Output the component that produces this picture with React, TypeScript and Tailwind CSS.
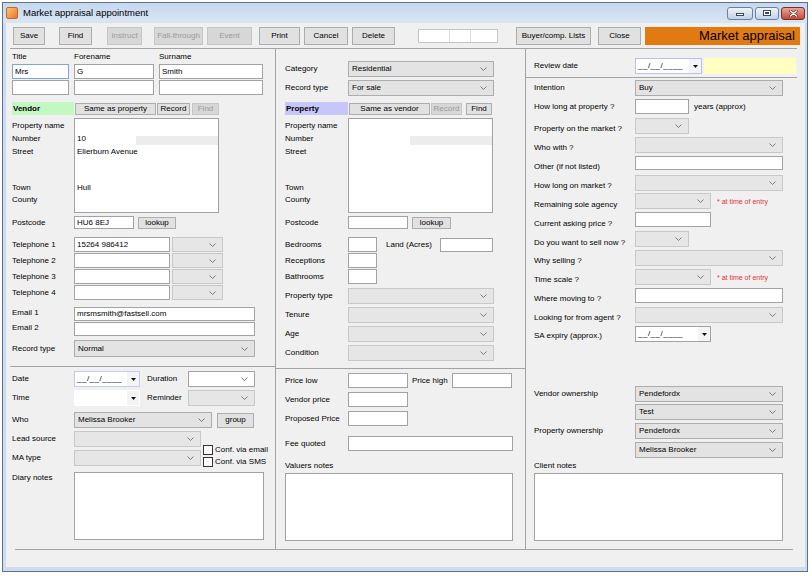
import React from "react";

type Kids = { className?: string; children?: React.ReactNode };

const Lbl: React.FC<Kids> = ({ className = "", children }) => (
  <div className={`shrink-0 whitespace-nowrap text-[8px] leading-[12px] ${className}`}>{children}</div>
);

const TextBox: React.FC<Kids & { focus?: boolean }> = ({ className = "", children, focus }) => (
  <div
    className={`shrink-0 flex items-center overflow-hidden whitespace-nowrap bg-white border pl-[2px] text-[8px] ${
      focus ? "border-[#7fa6dc]" : "border-[#a2a2a2]"
    } ${className}`}
  >
    {children}
  </div>
);

const Chevron = () => (
  <svg width="7" height="4" viewBox="0 0 7 4" className="shrink-0">
    <path d="M0.5 0.5L3.5 3.5L6.5 0.5" fill="none" stroke="#6e6e6e" strokeWidth="0.9" />
  </svg>
);

const Combo: React.FC<{ className?: string; value?: string; white?: boolean; off?: boolean }> = ({
  className = "",
  value,
  white,
  off,
}) => (
  <div
    className={`shrink-0 flex items-center border pl-[3px] pr-[6px] text-[8px] whitespace-nowrap ${
      white ? "bg-white border-[#a2a2a2]" : off ? "bg-[#e6e6e6] border-[#c8c8c8]" : "bg-[#e3e3e3] border-[#adadad]"
    } ${className}`}
  >
    <span className="flex-1 overflow-hidden">{value}</span>
    <Chevron />
  </div>
);

const Btn: React.FC<Kids & { off?: boolean }> = ({ className = "", children, off }) => (
  <div
    className={`shrink-0 flex items-center justify-center border text-[8px] whitespace-nowrap ${
      off ? "bg-[#d7d7d7] border-[#c6c6c6] text-[#9b9b9b]" : "bg-[#e1e1e1] border-[#adadad] text-black"
    } ${className}`}
  >
    {children}
  </div>
);

const DatePick: React.FC<{ className?: string; border?: string; empty?: boolean }> = ({
  className = "",
  border = "border-[#a2a2a2]",
  empty,
}) => (
  <div className={`shrink-0 flex items-stretch bg-white border text-[8px] ${border} ${className}`}>
    <div className="flex-1 flex items-center pl-[2px] tracking-[0.5px]">{empty ? "" : "__/__/____"}</div>
    <div className="w-[12px] flex items-center justify-center bg-[#f4f4f4]">
      <svg width="5" height="3" viewBox="0 0 5 3">
        <path d="M0 0H5L2.5 3Z" fill="#111" />
      </svg>
    </div>
  </div>
);

const Check: React.FC<{ label: string; className?: string }> = ({ label, className = "" }) => (
  <div className={`flex items-center h-[11px] ${className}`}>
    <div className="w-[10px] h-[10px] bg-white border border-[#333]" />
    <span className="ml-[2px] text-[8px] leading-none whitespace-nowrap">{label}</span>
  </div>
);

// labels that sit beside the multi-line address box
const AddrLabels: React.FC<{ className?: string }> = ({ className = "" }) => (
  <div className={`shrink-0 flex flex-col text-[8px] pt-[1px] ${className}`}>
    <div className="h-[13px] flex items-center">Property name</div>
    <div className="h-[13px] flex items-center">Number</div>
    <div className="h-[13px] flex items-center">Street</div>
    <div className="h-[24px]" />
    <div className="h-[12px] flex items-center">Town</div>
    <div className="h-[12px] flex items-center">County</div>
  </div>
);

const AddressBox: React.FC<{ number?: string; street?: string; town?: string }> = ({ number, street, town }) => (
  <div className="shrink-0 w-[145px] h-[95px] bg-white border border-[#a2a2a2] flex flex-col text-[8px]">
    <div className="h-[13px]" />
    <div className="h-[13px] flex">
      <span className="flex-1 pl-[2px] flex items-center">{number}</span>
      <div className="w-[82px] h-[9px] self-end bg-[#ececec]" />
    </div>
    <div className="h-[13px] flex items-center pl-[2px]">{street}</div>
    <div className="h-[24px]" />
    <div className="h-[12px] flex items-center pl-[2px]">{town}</div>
  </div>
);

const QRow: React.FC<{ label: string; lt: string; className?: string; children?: React.ReactNode }> = ({
  label,
  lt,
  className = "",
  children,
}) => (
  <div className={`flex items-start h-[16px] ${className}`}>
    <Lbl className={`w-[101px] ${lt}`}>{label}</Lbl>
    {children}
  </div>
);

const Note = () => (
  <span className="ml-[6px] mt-[5px] text-[7px] leading-[8px] text-[#e0303a] whitespace-nowrap">* at time of entry</span>
);

const App: React.FC = () => {
  return (
    <div className="w-[812px] h-[576px] bg-white overflow-hidden font-['Liberation_Sans',Arial,sans-serif] text-black">
      <div className="ml-[2px] mt-[2px] w-[806px] h-[570px] border border-[#5d7290] bg-[#cddcee] flex flex-col">
        {/* title bar */}
        <div className="h-[20px] flex items-center bg-linear-to-b from-[#c6d8ee] to-[#d8e5f4]">
          <div className="ml-[3px] w-[12px] h-[12px] rounded-[2px] bg-linear-to-br from-[#fbc27a] to-[#e9761c] border border-[#c5691d]" />
          <span className="ml-[5px] pt-[1px] text-[9.5px] whitespace-nowrap">Market appraisal appointment</span>
          <div className="ml-auto mr-[2px] flex items-center gap-[2px]">
            <div className="w-[26px] h-[13px] rounded-[3px] border border-[#6d809b] bg-linear-to-b from-[#eef3fa] to-[#c3d2e6] flex items-end justify-center pb-[3px]">
              <div className="w-[8px] h-[3px] bg-white border border-[#3b4a5e]" />
            </div>
            <div className="w-[24px] h-[13px] rounded-[3px] border border-[#6d809b] bg-linear-to-b from-[#eef3fa] to-[#c3d2e6] flex items-center justify-center">
              <div className="w-[8px] h-[6px] bg-white border border-[#3b4a5e] flex items-center justify-center">
                <div className="w-[4px] h-[2px] border border-[#3b4a5e]" />
              </div>
            </div>
            <div className="w-[24px] h-[13px] rounded-[3px] border border-[#7a2e28] bg-linear-to-b from-[#e8a393] to-[#c7473b] flex items-center justify-center">
              <svg width="9" height="7" viewBox="0 0 9 7">
                <path d="M1.5 1L7.5 6M7.5 1L1.5 6" stroke="#5a1e19" strokeWidth="2.6" strokeLinecap="round" />
                <path d="M1.5 1L7.5 6M7.5 1L1.5 6" stroke="#fff" strokeWidth="1.5" strokeLinecap="round" />
              </svg>
            </div>
          </div>
        </div>

        {/* client area */}
        <div className="ml-[3px] w-[799px] h-[544px] bg-[#f0f0f0] flex flex-col">
          {/* toolbar */}
          <div className="flex items-center h-[18px] mt-[4px] pl-[7px]">
            <Btn className="w-[32px] h-[18px]">Save</Btn>
            <Btn className="ml-[14px] w-[33px] h-[18px]">Find</Btn>
            <Btn off className="ml-[15px] w-[35px] h-[18px]">Instruct</Btn>
            <Btn off className="ml-[12px] w-[49px] h-[18px]">Fall-through</Btn>
            <Btn off className="ml-[4px] w-[45px] h-[18px]">Event</Btn>
            <Btn className="ml-[7px] w-[41px] h-[18px]">Print</Btn>
            <Btn className="ml-[4px] w-[44px] h-[18px]">Cancel</Btn>
            <Btn className="ml-[4px] w-[43px] h-[18px]">Delete</Btn>
            <div className="ml-[23px] flex h-[14px] bg-white border border-[#c4c4c4]">
              <div className="w-[31px] border-r border-[#dcdcdc]" />
              <div className="w-[21px] border-r border-[#dcdcdc]" />
              <div className="w-[26px]" />
            </div>
            <Btn className="ml-[18px] w-[75px] h-[18px]">Buyer/comp. Lists</Btn>
            <Btn className="ml-[7px] w-[43px] h-[18px]">Close</Btn>
            <div className="ml-[4px] w-[155px] h-[18px] bg-[#e27a12] flex items-center justify-end pr-[5px] text-[13px] whitespace-nowrap">
              Market appraisal
            </div>
          </div>

          <div className="ml-[4px] mt-[3px] w-[787px] h-[501px] border-t border-[#a3a3a3] flex">
            {/* column 1: vendor */}
            <div className="w-[266px] h-full border-r border-[#a3a3a3] flex flex-col pl-[2px]">
              <div className="flex mt-[2px] h-[12px]">
                <Lbl className="w-[62px]">Title</Lbl>
                <Lbl className="w-[85px]">Forename</Lbl>
                <Lbl>Surname</Lbl>
              </div>
              <div className="flex mt-[1px]">
                <TextBox focus className="w-[57px] h-[15px]">Mrs</TextBox>
                <TextBox className="ml-[5px] w-[80px] h-[15px]">G</TextBox>
                <TextBox className="ml-[5px] w-[104px] h-[15px]">Smith</TextBox>
              </div>
              <div className="flex mt-[1px]">
                <TextBox className="w-[57px] h-[15px]" />
                <TextBox className="ml-[5px] w-[80px] h-[15px]" />
                <TextBox className="ml-[5px] w-[104px] h-[15px]" />
              </div>
              <div className="flex items-center h-[13px] mt-[7px]">
                <div className="w-[62px] h-[13px] bg-[#c3f8c3] text-[8px] font-bold leading-[13px] pl-[1px]">Vendor</div>
                <Btn className="ml-[1px] w-[81px] h-[12px]">Same as property</Btn>
                <Btn className="ml-[1px] w-[33px] h-[12px]">Record</Btn>
                <Btn off className="ml-[2px] w-[27px] h-[12px]">Find</Btn>
              </div>
              <div className="flex mt-[3px]">
                <AddrLabels className="w-[62px]" />
                <AddressBox number="10" street="Ellerburn Avenue" town="Hull" />
              </div>
              <div className="flex items-center h-[13px] mt-[3px]">
                <Lbl className="w-[62px]">Postcode</Lbl>
                <TextBox className="w-[60px] h-[13px]">HU6 8EJ</TextBox>
                <Btn className="ml-[4px] w-[38px] h-[12px]">lookup</Btn>
              </div>
              {["Telephone 1", "Telephone 2", "Telephone 3", "Telephone 4"].map((t, i) => (
                <div key={t} className={`flex items-center h-[15px] ${i === 0 ? "mt-[8px]" : "mt-[1px]"}`}>
                  <Lbl className="w-[62px]">{t}</Lbl>
                  <TextBox className="w-[96px] h-[15px]">{i === 0 ? "15264 986412" : ""}</TextBox>
                  <Combo off className="ml-[2px] w-[51px] h-[15px]" />
                </div>
              ))}
              <div className="flex items-start h-[14px] mt-[7px]">
                <Lbl className="w-[62px]">Email 1</Lbl>
                <TextBox className="w-[181px] h-[14px]">mrsmsmith@fastsell.com</TextBox>
              </div>
              <div className="flex items-start h-[14px] mt-[1px]">
                <Lbl className="w-[62px]">Email 2</Lbl>
                <TextBox className="w-[181px] h-[14px]" />
              </div>
              <div className="flex items-center h-[17px] mt-[4px]">
                <Lbl className="w-[62px]">Record type</Lbl>
                <Combo className="w-[181px] h-[17px]" value="Normal" />
              </div>
              <div className="-ml-[2px] mt-[9px] border-t border-[#a3a3a3]" />

              <div className="flex items-center h-[16px] mt-[4px]">
                <Lbl className="w-[62px]">Date</Lbl>
                <DatePick className="w-[66px] h-[16px]" border="border-[#c3cbef]" />
                <Lbl className="ml-[7px] w-[41px]">Duration</Lbl>
                <Combo white className="w-[67px] h-[16px]" />
              </div>
              <div className="flex items-center h-[16px] mt-[3px]">
                <Lbl className="w-[62px]">Time</Lbl>
                <DatePick empty className="w-[66px] h-[16px]" border="border-white" />
                <Lbl className="ml-[7px] w-[41px]">Reminder</Lbl>
                <Combo off className="w-[67px] h-[16px]" />
              </div>
              <div className="flex items-center h-[16px] mt-[6px]">
                <Lbl className="w-[62px]">Who</Lbl>
                <Combo className="w-[138px] h-[16px]" value="Melissa Brooker" />
                <Btn className="ml-[5px] w-[37px] h-[15px]">group</Btn>
              </div>
              <div className="flex mt-[3px]">
                <div className="flex flex-col">
                  <div className="flex items-center h-[16px]">
                    <Lbl className="w-[62px]">Lead source</Lbl>
                    <Combo off className="w-[127px] h-[16px]" />
                  </div>
                  <div className="flex items-center h-[16px] mt-[3px]">
                    <Lbl className="w-[62px]">MA type</Lbl>
                    <Combo off className="w-[127px] h-[16px]" />
                  </div>
                </div>
                <div className="ml-[2px] pt-[13px] flex flex-col">
                  <Check label="Conf. via email" />
                  <Check label="Conf. via SMS" className="mt-[1px]" />
                </div>
              </div>
              <div className="flex items-start mt-[5px]">
                <Lbl className="w-[62px]">Diary notes</Lbl>
                <div className="w-[190px] h-[68px] bg-white border border-[#a2a2a2]" />
              </div>
            </div>

            {/* column 2: property */}
            <div className="w-[250px] h-full border-r border-[#a3a3a3] flex flex-col pl-[9px]">
              <div className="flex items-center h-[16px] mt-[12px]">
                <Lbl className="w-[63px]">Category</Lbl>
                <Combo className="w-[146px] h-[16px]" value="Residential" />
              </div>
              <div className="flex items-center h-[16px] mt-[3px]">
                <Lbl className="w-[63px]">Record type</Lbl>
                <Combo className="w-[146px] h-[16px]" value="For sale" />
              </div>
              <div className="flex items-center h-[13px] mt-[6px]">
                <div className="w-[63px] h-[13px] bg-[#c6c6fa] text-[8px] font-bold leading-[13px] pl-[1px]">Property</div>
                <Btn className="ml-[1px] w-[81px] h-[12px]">Same as vendor</Btn>
                <Btn off className="ml-[1px] w-[31px] h-[12px]">Record</Btn>
                <Btn className="ml-[4px] w-[26px] h-[12px]">Find</Btn>
              </div>
              <div className="flex mt-[3px]">
                <AddrLabels className="w-[63px]" />
                <AddressBox />
              </div>
              <div className="flex items-center h-[13px] mt-[3px]">
                <Lbl className="w-[63px]">Postcode</Lbl>
                <TextBox className="w-[60px] h-[13px]" />
                <Btn className="ml-[4px] w-[39px] h-[12px]">lookup</Btn>
              </div>
              <div className="flex items-center h-[15px] mt-[8px]">
                <Lbl className="w-[63px]">Bedrooms</Lbl>
                <TextBox className="w-[29px] h-[15px]" />
                <Lbl className="ml-[9px] w-[54px]">Land (Acres)</Lbl>
                <TextBox className="w-[53px] h-[14px]" />
              </div>
              <div className="flex items-center h-[15px] mt-[1px]">
                <Lbl className="w-[63px]">Receptions</Lbl>
                <TextBox className="w-[29px] h-[15px]" />
              </div>
              <div className="flex items-center h-[15px] mt-[1px]">
                <Lbl className="w-[63px]">Bathrooms</Lbl>
                <TextBox className="w-[29px] h-[15px]" />
              </div>
              {["Property type", "Tenure", "Age", "Condition"].map((t, i) => (
                <div key={t} className={`flex items-center h-[16px] ${i === 0 ? "mt-[4px]" : "mt-[3px]"}`}>
                  <Lbl className="w-[63px]">{t}</Lbl>
                  <Combo off className="w-[146px] h-[16px]" />
                </div>
              ))}
              <div className="-ml-[9px] mt-[7px] border-t border-[#a3a3a3]" />

              <div className="flex items-center h-[15px] mt-[4px]">
                <Lbl className="w-[63px]">Price low</Lbl>
                <TextBox className="w-[60px] h-[15px]" />
                <Lbl className="ml-[4px] w-[40px]">Price high</Lbl>
                <TextBox className="w-[60px] h-[15px]" />
              </div>
              <div className="flex items-center h-[15px] mt-[4px]">
                <Lbl className="w-[63px]">Vendor price</Lbl>
                <TextBox className="w-[60px] h-[15px]" />
              </div>
              <div className="flex items-center h-[15px] mt-[4px]">
                <Lbl className="w-[63px]">Proposed Price</Lbl>
                <TextBox className="w-[60px] h-[15px]" />
              </div>
              <div className="flex items-center h-[15px] mt-[10px]">
                <Lbl className="w-[63px]">Fee quoted</Lbl>
                <TextBox className="w-[165px] h-[15px]" />
              </div>
              <Lbl className="mt-[9px]">Valuers notes</Lbl>
              <div className="mt-[1px] w-[228px] h-[68px] bg-white border border-[#a2a2a2]" />
            </div>

            {/* column 3: appraisal questions */}
            <div className="w-[271px] h-full flex flex-col pl-[8px]">
              <div className="flex items-center h-[16px] mt-[9px]">
                <Lbl className="w-[101px]">Review date</Lbl>
                <DatePick className="w-[67px] h-[16px]" border="border-[#b9bff0]" />
                <div className="ml-[2px] w-[92px] h-[16px] bg-[#ffffc2]" />
              </div>
              <div className="-ml-[8px] w-[271px] mt-[3px] border-t border-[#a3a3a3]" />

              <QRow label="Intention" lt="mt-[2px]" className="mt-[2px]">
                <Combo className="w-[148px] h-[16px]" value="Buy" />
              </QRow>
              <QRow label="How long at property ?" lt="mt-[2px]" className="mt-[3px]">
                <TextBox className="w-[54px] h-[15px]" />
                <Lbl className="ml-[5px] mt-[2px]">years (approx)</Lbl>
              </QRow>
              <QRow label="Property on the market ?" lt="mt-[5px]" className="mt-[3px]">
                <Combo off className="w-[54px] h-[16px]" />
              </QRow>
              <QRow label="Who with ?" lt="mt-[5px]" className="mt-[3px]">
                <Combo off className="w-[148px] h-[16px]" />
              </QRow>
              <QRow label="Other (if not listed)" lt="mt-[5px]" className="mt-[3px]">
                <TextBox className="w-[148px] h-[14px]" />
              </QRow>
              <QRow label="How long on market ?" lt="mt-[5px]" className="mt-[3px]">
                <Combo off className="w-[148px] h-[16px]" />
              </QRow>
              <QRow label="Remaining sole agency" lt="mt-[6px]" className="mt-[2px]">
                <Combo off className="w-[76px] h-[16px]" />
                <Note />
              </QRow>
              <QRow label="Current asking price ?" lt="mt-[6px]" className="mt-[3px]">
                <TextBox className="w-[76px] h-[15px]" />
              </QRow>
              <QRow label="Do you want to sell now ?" lt="mt-[6px]" className="mt-[3px]">
                <Combo off className="w-[54px] h-[16px]" />
              </QRow>
              <QRow label="Why selling ?" lt="mt-[5px]" className="mt-[3px]">
                <Combo off className="w-[148px] h-[16px]" />
              </QRow>
              <QRow label="Time scale ?" lt="mt-[5px]" className="mt-[3px]">
                <Combo off className="w-[76px] h-[16px]" />
                <Note />
              </QRow>
              <QRow label="Where moving to ?" lt="mt-[5px]" className="mt-[3px]">
                <TextBox className="w-[148px] h-[15px]" />
              </QRow>
              <QRow label="Looking for from agent ?" lt="mt-[5px]" className="mt-[3px]">
                <Combo off className="w-[148px] h-[16px]" />
              </QRow>
              <QRow label="SA expiry (approx.)" lt="mt-[4px]" className="mt-[3px]">
                <DatePick className="w-[76px] h-[16px]" />
              </QRow>

              <div className="flex items-center h-[16px] mt-[44px]">
                <Lbl className="w-[101px]">Vendor ownership</Lbl>
                <Combo className="w-[148px] h-[16px]" value="Pendefordx" />
              </div>
              <div className="flex items-center h-[16px] mt-[2px]">
                <div className="w-[101px]" />
                <Combo className="w-[148px] h-[16px]" value="Test" />
              </div>
              <div className="flex items-center h-[16px] mt-[3px]">
                <Lbl className="w-[101px]">Property ownership</Lbl>
                <Combo className="w-[148px] h-[16px]" value="Pendefordx" />
              </div>
              <div className="flex items-center h-[16px] mt-[3px]">
                <div className="w-[101px]" />
                <Combo className="w-[148px] h-[16px]" value="Melissa Brooker" />
              </div>
              <Lbl className="mt-[2px]">Client notes</Lbl>
              <div className="mt-[1px] w-[249px] h-[68px] bg-white border border-[#a2a2a2]" />
            </div>
          </div>
          <div className="ml-[9px] w-[778px] border-t border-[#a3a3a3]" />
        </div>
      </div>
    </div>
  );
};

export default App;
